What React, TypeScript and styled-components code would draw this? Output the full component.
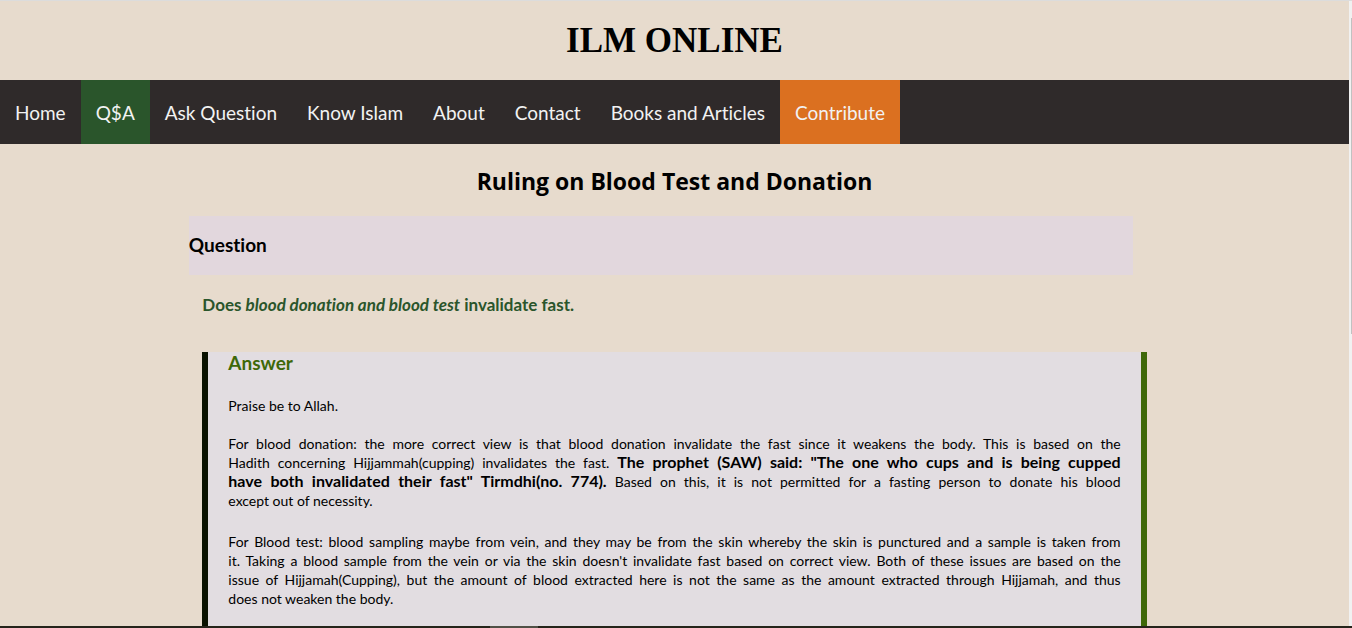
import React from "react";
import styled, { createGlobalStyle } from "styled-components";

const GlobalStyle = createGlobalStyle`
  *, *::before, *::after { box-sizing: border-box; }
  body {
    margin: 0;
    background: #e7dbcd;
    color: #000;
    font-family: "Gill Sans", "Gill Sans MT", Lato, sans-serif;
    font-size: 14px;
    line-height: 19px;
    font-variant-ligatures: none;
  }
  h1, h2, h3, p { margin: 0; }
`;

const Frame = styled.div`
  display: flex;
  flex-direction: column;
  height: 100vh;
  border-top: 1px solid #dcdcdc;
`;

const Viewport = styled.div`
  display: flex;
  flex: 1;
  min-height: 0;
`;

const Page = styled.div`
  flex: 1;
  min-width: 0;
  overflow-y: auto;
  scrollbar-width: none;
`;

const ScrollTrack = styled.div`
  width: 3px;
  padding: 17px 0 0 2px;
  background: #f1f1f1;
`;

const ScrollThumb = styled.div`
  height: 52%;
  background: #c1c1c1;
`;

const BottomEdge = styled.div`
  display: flex;
  height: 2px;
  padding-left: 490px;
  background: #25241a;
`;

const BottomHighlight = styled.div`
  width: 48px;
  background: #505046;
`;

const SiteTitle = styled.h1`
  padding: 20px 0 19px;
  font-family: Baskerville, "Liberation Serif", serif;
  font-size: 35px;
  line-height: 40px;
  text-align: center;
`;

const Nav = styled.nav`
  display: flex;
  height: 64px;
  background: #2f2a2a;
`;

const NavLink = styled.a<{ $fill?: string }>`
  display: flex;
  align-items: center;
  padding: 0 15px;
  background: ${({ $fill }) => $fill ?? "transparent"};
  color: #f2f2f2;
  font-size: 19px;
  text-decoration: none;
  white-space: nowrap;
`;

const Topic = styled.h2`
  padding: 22px 0 20px;
  font-family: "Segoe UI", "Open Sans", sans-serif;
  font-size: 23px;
  line-height: 30px;
  text-align: center;
`;

const QuestionBar = styled.section`
  width: 70%;
  margin-left: 14%;
  padding: 18px 0 19px;
  background: #e2d7dd;
`;

const Subheading = styled.h3<{ $color?: string }>`
  color: ${({ $color }) => $color ?? "#000"};
  font-size: 19px;
  line-height: 22px;
`;

const QuestionText = styled.p`
  width: 70%;
  margin: 20px auto 38px;
  color: #2a552b;
  font-size: 17px;
  font-weight: 700;
`;

const AnswerCard = styled.article`
  display: flex;
  flex-direction: column;
  gap: 22px;
  width: 70%;
  margin: 0 auto;
  padding: 0 20px 60px;
  border-left: 6px solid #0a1200;
  border-right: 6px solid #3e6809;
  background: #e2dde1;
  text-align: justify;
`;

const Opening = styled.div`
  display: flex;
  flex-direction: column;
  gap: 19px;
`;

const Quote = styled.strong`
  font-size: 16px;
  line-height: 1;
`;

const links: { label: string; fill?: string }[] = [
  { label: "Home" },
  { label: "Q$A", fill: "#2a552b" },
  { label: "Ask Question" },
  { label: "Know Islam" },
  { label: "About" },
  { label: "Contact" },
  { label: "Books and Articles" },
  { label: "Contribute", fill: "#db7020" },
];

export default function App() {
  return (
    <>
      <GlobalStyle />
      <Frame>
        <Viewport>
          <Page>
            <header>
              <SiteTitle>ILM ONLINE</SiteTitle>
              <Nav>
                {links.map(({ label, fill }) => (
                  <NavLink key={label} href="#" $fill={fill}>
                    {label}
                  </NavLink>
                ))}
              </Nav>
            </header>
            <main>
              <Topic>Ruling on Blood Test and Donation</Topic>
              <QuestionBar>
                <Subheading>Question</Subheading>
              </QuestionBar>
              <QuestionText>
                Does <em>blood donation and blood test</em> invalidate fast.
              </QuestionText>
              <AnswerCard>
                <Subheading $color="#3e6809">Answer</Subheading>
                <Opening>
                  <p>Praise be to Allah.</p>
                  <p>
                    For blood donation: the more correct view is that blood donation invalidate the
                    fast since it weakens the body. This is based on the Hadith&nbsp;concerning
                    Hijjammah(cupping) invalidates the fast.{" "}
                    <Quote>
                      The prophet (SAW) said: "The one who cups and is being cupped
                      have&nbsp;both&nbsp;invalidated their fast" Tirmdhi(no. 774).
                    </Quote>{" "}
                    Based on this, it is not permitted for a fasting person to donate his blood
                    except&nbsp;out&nbsp;of&nbsp;necessity.
                  </p>
                </Opening>
                <p>
                  For Blood test: blood sampling maybe from vein, and they may be from the skin
                  whereby the skin is punctured and a sample is taken from it.&nbsp;Taking a blood
                  sample from the vein or via the skin doesn't invalidate fast based on correct
                  view. Both of these issues are based on the issue&nbsp;of&nbsp;Hijjamah(Cupping),
                  but the amount of blood extracted here is not the same as the amount extracted
                  through Hijjamah, and thus does&nbsp;not&nbsp;weaken the body.
                </p>
              </AnswerCard>
            </main>
          </Page>
          <ScrollTrack>
            <ScrollThumb />
          </ScrollTrack>
        </Viewport>
        <BottomEdge>
          <BottomHighlight />
        </BottomEdge>
      </Frame>
    </>
  );
}
